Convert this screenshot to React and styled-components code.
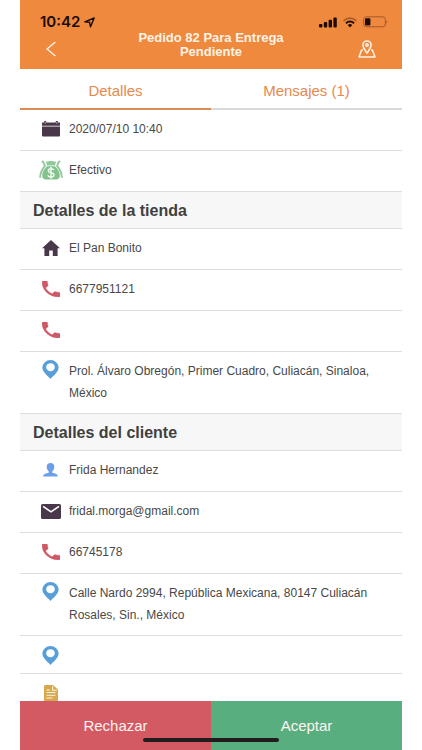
import React from 'react'
import styled, { createGlobalStyle } from 'styled-components'

const GlobalStyle = createGlobalStyle`
    * {
        box-sizing: border-box;
    }
    body {
        margin: 0;
        background-color: #ffffff;
        font-family: "Liberation Sans", Arial, sans-serif;
        color: #484848;
    }
    button {
        font-family: inherit;
        border: none;
        padding: 0;
        cursor: pointer;
    }
    svg {
        display: block;
        flex: none;
    }
`

const Screen = styled.div`
    height: 100vh;
    margin: 0 20px;
    display: flex;
    flex-direction: column;
    position: relative;
`

const Header = styled.header`
    flex: none;
    height: 69px;
    background-color: #ee893e;
    padding-top: 14px;
`

const StatusBar = styled.div`
    display: flex;
    justify-content: space-between;
    align-items: center;
    height: 16px;
    padding: 0 14px 0 20px;
    color: #1c0c06;
`

const StatusGroup = styled.div`
    display: flex;
    align-items: center;
    gap: ${(props) => props.$gap}px;
`

const Time = styled.span`
    font-family: Inter, "Liberation Sans", sans-serif;
    font-size: 15px;
    font-weight: 600;
    line-height: 16px;
`

const NavBar = styled.div`
    display: grid;
    grid-template-columns: 60px 1fr 60px;
    padding-top: 1px;
`

const Title = styled.h1`
    margin: 0;
    font-size: 13px;
    line-height: 14px;
    font-weight: 700;
    color: #fff3e6;
    text-align: center;

    span {
        display: block;
    }
`

const IconButton = styled.button`
    height: 36px;
    display: flex;
    align-items: center;
    justify-content: ${(props) => (props.$end ? 'flex-end' : 'flex-start')};
    padding: ${(props) => (props.$end ? '0 26px 0 0' : '0 0 0 26px')};
    background-color: transparent;
`

const Tabs = styled.div`
    flex: none;
    display: grid;
    grid-template-columns: 1fr 1fr;
    height: 41px;
`

const Tab = styled.button`
    background-color: transparent;
    color: #e6894d;
    font-size: 15px;
    line-height: 18px;
    padding-top: 5px;
    border-bottom: 2px solid ${(props) => (props.$active ? '#dc8c58' : '#d9d9dc')};
`

const Content = styled.main`
    flex: 1;
    min-height: 0;
    overflow-y: auto;
    scrollbar-width: none;
`

const SectionTitle = styled.h2`
    margin: 0;
    height: 37px;
    padding: 0 13px;
    background-color: #f7f7f7;
    border-bottom: 1px solid #dedede;
    font-size: 16px;
    line-height: 37px;
    font-weight: 700;
    color: #404040;
`

const Row = styled.div`
    display: flex;
    align-items: flex-start;
    min-height: ${(props) => (props.$short ? 38 : 41)}px;
    padding: 8px 16px ${(props) => (props.$short ? 6 : 9)}px 18px;
    border-bottom: 1px solid #dedede;
`

const RowIcon = styled.div`
    flex: none;
    width: 25px;
    height: ${(props) => (props.$address ? 18 : 22)}px;
    display: flex;
    align-items: center;
    justify-content: center;
    margin-right: 6px;
`

const RowText = styled.div`
    flex: 1;
    font-size: 12px;
    line-height: 22px;
`

const Footer = styled.footer`
    flex: none;
    display: grid;
    grid-template-columns: 1fr 1fr;
    height: 49px;
`

const ActionButton = styled.button`
    background-color: ${(props) => props.$color};
    color: #fdf4f2;
    font-size: 15px;
    line-height: 18px;
`

const HomeIndicator = styled.div`
    position: absolute;
    bottom: 8px;
    left: 50%;
    width: 136px;
    height: 4px;
    margin-left: -68px;
    border-radius: 2px;
    background-color: #231c1e;
`

const LocationArrow = () => (
    <svg width="11" height="11" viewBox="0 0 11 11">
        <path d="M.8 4.8L10.200 1L6.500 9.800L5.600 5.300Z" fill="none" stroke="currentColor" strokeWidth="1.400" strokeLinejoin="round" />
    </svg>
)

const Signal = () => (
    <svg width="18" height="11" viewBox="0 0 18 11" fill="currentColor">
        <rect x="0" y="7" width="3.4" height="3.6" rx="1" />
        <rect x="4.8" y="5" width="3.4" height="5.6" rx="1" />
        <rect x="9.6" y="2.8" width="3.4" height="7.8" rx="1" />
        <rect x="14.4" y="0.4" width="3.4" height="10.2" rx="1" />
    </svg>
)

const Wifi = () => (
    <svg width="14" height="11" viewBox="0 0 14 11" fill="none">
        <path d="M.6 3.9Q7-1.5 13.4 3.9" stroke="#a95a28" strokeWidth="1.7" />
        <path d="M2.9 6.2Q7 2.7 11.1 6.2" stroke="currentColor" strokeWidth="1.9" />
        <path d="M4.7 8Q7 6.2 9.3 8L7 10.4Z" fill="currentColor" />
    </svg>
)

const Battery = () => (
    <svg width="25" height="12" viewBox="0 0 25 12">
        <rect x="0.6" y="0.8" width="21.8" height="10" rx="2.8" fill="none" stroke="#a4592b" strokeWidth="1" />
        <path d="M23.5 4.2Q25 5.8 23.5 7.4Z" fill="#7b3e1c" />
        <rect x="2" y="2.2" width="5.4" height="7.2" rx="1.2" fill="currentColor" />
    </svg>
)

const BackIcon = () => (
    <svg width="10" height="16" viewBox="0 0 10 16">
        <path d="M9.4 1L1 8L9.4 15" fill="none" stroke="#fff3e6" strokeWidth="1.4" />
    </svg>
)

const MapIcon = () => (
    <svg width="18" height="18" viewBox="0 0 18 18" fill="none" stroke="#fff3e6" strokeWidth="1.5" strokeLinejoin="round">
        <path d="M9 13.2C7.2 10.3 4.9 7.8 4.9 5A4.1 4.1 0 0 1 13.1 5C13.1 7.8 10.8 10.3 9 13.2Z" />
        <circle cx="9" cy="5" r="1.2" />
        <path d="M5 10H3.6L1 16.9H17L14.4 10H13" />
    </svg>
)

const CalendarIcon = () => (
    <svg width="18" height="16" viewBox="0 0 18 16" fill="#49374a">
        <path d="M0 1.5H2.2V0H4.2V1.5H13.8V0H15.8V1.5H18V4.8H0Z" />
        <path d="M0 5.6H18V14.6Q18 15.6 17 15.6H1Q0 15.6 0 14.6Z" />
        <path d="M3.2 1V2.8M14.8 1V2.8" stroke="#ffffff" strokeWidth="0.6" />
    </svg>
)

const MoneyIcon = () => (
    <svg width="24" height="20" viewBox="0 0 25 20">
        <path d="M4.2 1.2L6.2 5.8C3.5 9 1.2 12.5 1.2 18M20.8 1.2L18.8 5.8C21.5 9 23.8 12.5 23.8 18" fill="none" stroke="#91c99a" strokeWidth="2" />
        <path d="M3 .5L5 2M22 .5L20 2" stroke="#91c99a" strokeWidth="1.6" />
        <path d="M7 1Q8.5 2 10 1Q12.5-.3 15 1Q16.5 2 18 1L16.6 5.2H8.4Z" fill="#91c99a" />
        <path d="M8.4 6H16.6C19.8 8.8 22 12.4 21.6 16.5Q21 19.8 17.8 19.8H7.2Q4 19.8 3.4 16.5C3 12.4 5.2 8.8 8.4 6Z" fill="#83c18e" />
        <path d="M15.4 10.1Q15 8.6 12.5 8.6Q9.7 8.6 9.7 10.7Q9.7 12.3 12.5 12.8Q15.6 13.3 15.6 15.3Q15.6 17.3 12.5 17.3Q9.6 17.3 9.4 15.5M12.5 7V19" fill="none" stroke="#f1fbef" strokeWidth="1.5" />
    </svg>
)

const HomeIcon = () => (
    <svg width="18" height="16" viewBox="0 0 18 16">
        <path d="M9 0L18 8.3H15.6V16H10.8V10.5H7.2V16H2.4V8.3H0Z" fill="#49374a" />
    </svg>
)

const PhoneIcon = () => (
    <svg width="18" height="16" viewBox="3 3 18 18" preserveAspectRatio="none">
        <path d="M6.6 10.8c1.4 2.8 3.8 5.1 6.6 6.6l2.2-2.2c.3-.3.7-.4 1-.2 1.1.4 2.3.6 3.6.6.6 0 1 .4 1 1V20c0 .6-.4 1-1 1C10.6 21 3 13.4 3 4c0-.6.4-1 1-1h3.5c.6 0 1 .4 1 1 0 1.2.2 2.5.6 3.6.1.3 0 .7-.3 1z" fill="#ce5965" stroke="#ce5965" strokeWidth="0.4" />
    </svg>
)

const PinIcon = () => (
    <svg width="17" height="19" viewBox="0 0 17 19">
        <path fillRule="evenodd" d="M8.5 0A8.1 7.7 0 0 0 .4 7.6C.4 12 5.2 15.5 8.5 19C11.8 15.5 16.6 12 16.6 7.6A8.1 7.7 0 0 0 8.500 0ZM8.5 3.2A4.3 4 0 1 1 8.5 11.2A4.3 4 0 0 1 8.5 3.2Z" fill="#589fd9" />
    </svg>
)

const PersonIcon = () => (
    <svg width="15" height="14" viewBox="0 0 15 14">
        <path d="M7.5 0C10 0 11.3 1.4 11.3 3.8C11.3 5.8 10.5 7.4 9.3 8.3V9.8C11.5 10.6 14.8 10.5 14.8 13.5H.2C.2 10.5 3.5 10.6 5.7 9.8V8.3C4.5 7.4 3.7 5.8 3.7 3.8C3.7 1.4 5 0 7.5 0Z" fill="#6c9eea" />
    </svg>
)

const MailIcon = () => (
    <svg width="20" height="15" viewBox="0 0 20 15">
        <rect width="20" height="15" rx="1.6" fill="#49374a" />
        <path d="M2 2.4L10 7.8L18 2.4" fill="none" stroke="#ffffff" strokeWidth="1.6" />
    </svg>
)

const NoteIcon = () => (
    <svg width="14" height="17" viewBox="0 0 14 17">
        <path d="M1.4 0H9L14 4.6V15.6Q14 17 12.6 17H1.4Q0 17 0 15.6V1.4Q0 0 1.4 0Z" fill="#d6a851" />
        <path d="M8.6 1.2V5.2H12.8M2.5 5H6M2.5 7.5H11.5M2.5 10.2H11.5M2.5 13H8.5" fill="none" stroke="#fff5dc" strokeWidth="1.1" />
    </svg>
)

const orderInfo = [
    { id: 'date', icon: <CalendarIcon />, text: '2020/07/10 10:40' },
    { id: 'payment', icon: <MoneyIcon />, text: 'Efectivo' },
]

const storeInfo = [
    { id: 'name', icon: <HomeIcon />, text: 'El Pan Bonito' },
    { id: 'phone', icon: <PhoneIcon />, text: '6677951121' },
    { id: 'phone2', icon: <PhoneIcon />, text: '' },
    { id: 'address', icon: <PinIcon />, text: 'Prol. Álvaro Obregón, Primer Cuadro, Culiacán, Sinaloa, México', address: true },
]

const clientInfo = [
    { id: 'name', icon: <PersonIcon />, text: 'Frida Hernandez' },
    { id: 'email', icon: <MailIcon />, text: 'fridal.morga@gmail.com' },
    { id: 'phone', icon: <PhoneIcon />, text: '66745178' },
    { id: 'address', icon: <PinIcon />, text: 'Calle Nardo 2994, República Mexicana, 80147 Culiacán Rosales, Sin., México', address: true },
    { id: 'reference', icon: <PinIcon />, text: '', short: true },
    { id: 'notes', icon: <NoteIcon />, text: '' },
]

const InfoRows = ({ items }) => (
    <>
        {items.map((item) => (
            <Row key={item.id} $short={item.short}>
                <RowIcon $address={item.address}>{item.icon}</RowIcon>
                <RowText>{item.text}</RowText>
            </Row>
        ))}
    </>
)

const App = () => {
    return (
        <>
            <GlobalStyle />
            <Screen>
                <Header>
                    <StatusBar>
                        <StatusGroup $gap={4}>
                            <Time>10:42</Time>
                            <LocationArrow />
                        </StatusGroup>
                        <StatusGroup $gap={6}>
                            <Signal />
                            <Wifi />
                            <Battery />
                        </StatusGroup>
                    </StatusBar>
                    <NavBar>
                        <IconButton aria-label="Volver"><BackIcon /></IconButton>
                        <Title>
                            <span>Pedido 82 Para Entrega</span>
                            <span>Pendiente</span>
                        </Title>
                        <IconButton $end aria-label="Mapa"><MapIcon /></IconButton>
                    </NavBar>
                </Header>
                <Tabs role="tablist">
                    <Tab role="tab" aria-selected="true" $active>Detalles</Tab>
                    <Tab role="tab" aria-selected="false">Mensajes (1)</Tab>
                </Tabs>
                <Content>
                    <InfoRows items={orderInfo} />
                    <SectionTitle>Detalles de la tienda</SectionTitle>
                    <InfoRows items={storeInfo} />
                    <SectionTitle>Detalles del cliente</SectionTitle>
                    <InfoRows items={clientInfo} />
                </Content>
                <Footer>
                    <ActionButton $color="#d35963">Rechazar</ActionButton>
                    <ActionButton $color="#59ae80">Aceptar</ActionButton>
                </Footer>
                <HomeIndicator />
            </Screen>
        </>
    )
}

export default App
